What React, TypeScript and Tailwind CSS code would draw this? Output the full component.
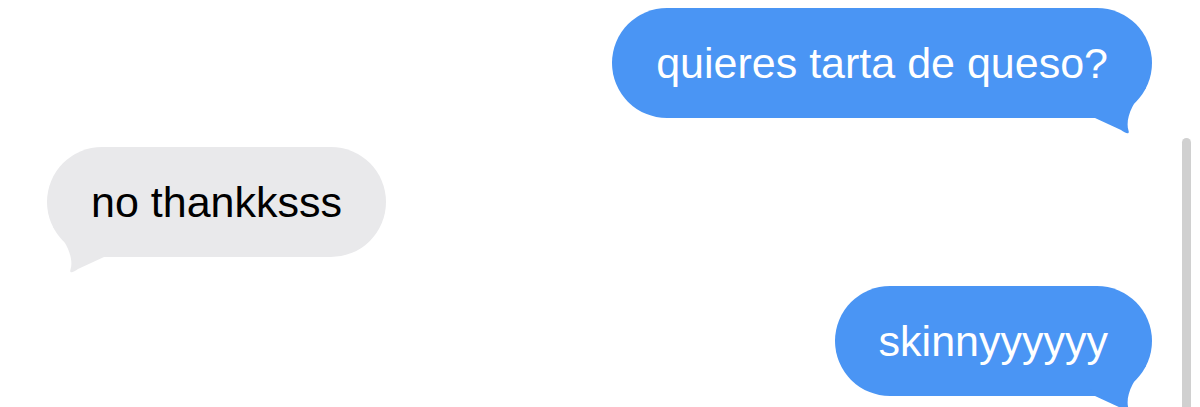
import React from 'react'

const font = "font-['Liberation_Sans',Arial,sans-serif]"

function Tail({ side, color }: { side: 'left' | 'right'; color: string }) {
  const pos = side === 'right' ? 'right-0' : 'left-0 -scale-x-100'
  return (
    <svg
      className={`pointer-events-none absolute -bottom-[17px] h-[55px] w-[62px] ${pos}`}
      viewBox="0 0 62 55"
    >
      <path
        d="M0 30 L5 38 L31 50 C35 53 40 55.5 38.5 50.5 C35 40 42 22 56 8 L40 0 L0 0 Z"
        fill={color}
      />
    </svg>
  )
}

function Bubble({ text, from }: { text: string; from: 'me' | 'them' }) {
  const me = from === 'me'
  return (
    <div
      className={`relative flex h-[110px] items-center rounded-full px-[44px] ${
        me ? 'self-end bg-[#4a95f4] text-white' : 'self-start bg-[#e9e9eb] text-black'
      }`}
    >
      <Tail side={me ? 'right' : 'left'} color={me ? '#4a95f4' : '#e9e9eb'} />
      <span className={`${font} relative z-10 whitespace-nowrap text-[43px] leading-none`}>{text}</span>
    </div>
  )
}

export default function App() {
  return (
    <div className="relative h-[407px] w-[1200px] overflow-hidden bg-white">
      <div className="flex flex-col gap-[29px] pl-[47px] pr-[48px] pt-[8px]">
        <Bubble from="me" text="quieres tarta de queso?" />
        <Bubble from="them" text="no thankksss" />
        <Bubble from="me" text="skinnyyyyyy" />
      </div>

      {/* scrollbar */}
      <div className="absolute bottom-0 right-[9px] top-[138px] w-[9px] rounded-t-full bg-[#d0d0d0]" />
    </div>
  )
}
